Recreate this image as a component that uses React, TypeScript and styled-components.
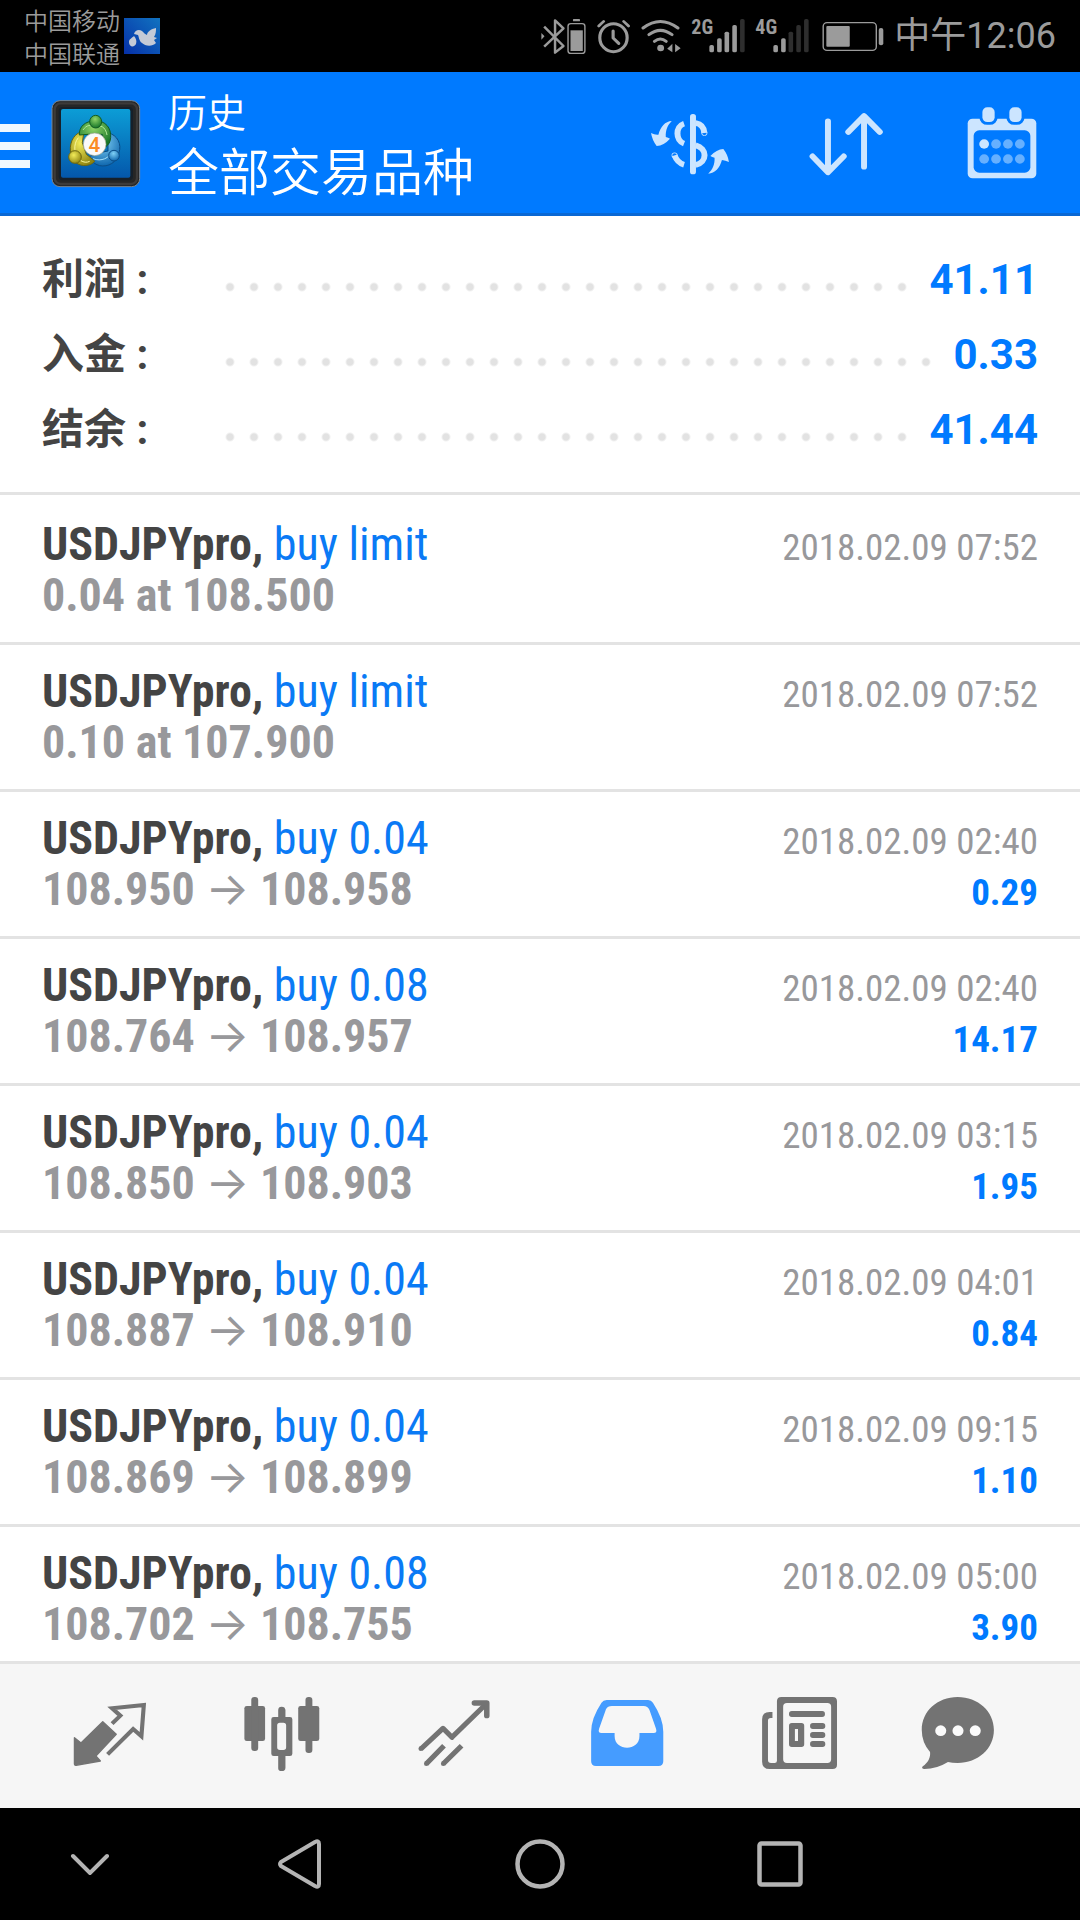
import React from "react";
import styled, { createGlobalStyle } from "styled-components";

const sans = `Roboto, "Noto Sans CJK SC", sans-serif`;
const condensed = `"Roboto Condensed", "Liberation Sans Narrow", Roboto, "Noto Sans CJK SC", sans-serif`;
const cjk = `"Noto Sans CJK SC", sans-serif`;

const color = {
  blue: "#007aff",
  blueDark: "#0a68d4",
  ice: "#cce5ff",
  link: "#0a7af5",
  ink: "#444444",
  muted: "#98989b",
  rule: "#e3e3e3",
  tab: "#737373",
  tabActive: "#459cff",
  status: "#9b9b9b",
};

const GlobalStyle = createGlobalStyle`
  *, *::before, *::after { box-sizing: border-box; }
  body { margin: 0; background: #fff; font-family: ${sans}; }
  h1, h2, p, dl, dt, dd, ul { margin: 0; padding: 0; font-weight: inherit; font-size: inherit; }
  ul { list-style: none; }
`;

const Screen = styled.div`
  display: flex;
  flex-direction: column;
  height: 100vh;
  background: #fff;
`;

/* Status bar */

const StatusBar = styled.div`
  display: flex;
  align-items: center;
  justify-content: space-between;
  height: 72px;
  flex: none;
  padding: 0 24px;
  background: #000;
  color: ${color.status};
`;

const StatusGroup = styled.div<{ $gap: number }>`
  display: flex;
  align-items: center;
  gap: ${(p) => p.$gap}px;
`;

const Carriers = styled.div`
  font: 350 24px/33px ${cjk};
`;

const Signal = styled.div`
  display: flex;
  align-items: flex-start;
`;

const Network = styled.span`
  width: 18px;
  font: 700 20px/22px ${condensed};
`;

const Clock = styled.time`
  font: 400 36px/40px Roboto, ${cjk};
`;

const Glyph = styled.svg`
  display: block;
  flex: none;
`;

/* App bar */

const AppBar = styled.header`
  display: flex;
  align-items: stretch;
  height: 144px;
  flex: none;
  background: ${color.blue};
  box-shadow: inset 0 -3px ${color.blueDark};
  color: #fff;
`;

const IconButton = styled.button`
  display: flex;
  align-items: center;
  justify-content: center;
  border: 0;
  padding: 0;
  background: none;
  color: inherit;
  cursor: pointer;
`;

const MenuButton = styled(IconButton)`
  gap: 21px;
`;

const Titles = styled.div`
  flex: 1;
  display: flex;
  flex-direction: column;
  justify-content: center;
  padding: 0 0 8px 27px;
  white-space: nowrap;
`;

const Section = styled.p`
  font: 350 39px/58px ${cjk};
`;

const Title = styled.h1`
  font: 350 51px/60px ${cjk};
`;

const Action = styled(IconButton)`
  width: 156px;
  color: ${color.ice};
`;

/* Content */

const Content = styled.main`
  flex: 1;
  min-height: 0;
  overflow-y: auto;
  scrollbar-width: none;
`;

const Summary = styled.dl`
  padding: 26px 42px 25px;
  border-bottom: 3px solid ${color.rule};
`;

const SummaryRow = styled.div`
  display: flex;
  height: 75px;
  font: 700 42px/75px ${sans};
`;

const SummaryLabel = styled.dt`
  width: 174px;
  color: ${color.ink};
`;

const Leader = styled.span`
  flex: 1;
  margin-right: 12px;
  background: radial-gradient(circle at 14px 45px, #e2e2e2 3px, transparent 5px) 0 0 / 24px 75px;
`;

const SummaryValue = styled.dd`
  color: ${color.blue};
`;

const Deals = styled.ul`
  && {
    padding-top: 3px;
  }
`;

const Deal = styled.li`
  padding: 21px 42px;
  border-bottom: 3px solid ${color.rule};
  font: 700 46px/51px ${condensed};
`;

const DealLine = styled.div`
  display: flex;
  align-items: baseline;
  justify-content: space-between;
  height: 51px;
  color: ${color.muted};
`;

const Symbol = styled.h2`
  color: ${color.ink};
`;

const Side = styled.span`
  font-weight: 400;
  color: ${color.link};
`;

const Arrow = styled.span`
  font-family: Inter, ${cjk};
  font-weight: 400;
  line-height: 0;
`;

const DealTime = styled.time`
  font-size: 37px;
  font-weight: 400;
`;

const Profit = styled.span`
  font-size: 37px;
  color: ${color.blue};
`;

/* Bottom bars */

const TabBar = styled.nav`
  display: grid;
  grid-template-columns: repeat(5, 172fr) 148fr;
  height: 147px;
  flex: none;
  padding: 0 48px 0 24px;
  border-top: 3px solid ${color.rule};
  background: #f6f6f6;
`;

const Tab = styled(IconButton)<{ $active?: boolean }>`
  color: ${(p) => (p.$active ? color.tabActive : color.tab)};
`;

const SystemBar = styled.div`
  display: grid;
  grid-template-columns: 180fr 240fr 240fr 240fr 180fr;
  height: 112px;
  flex: none;
  background: #000;
  color: #b4b4b4;
`;

/* Drawings */

type DrawingProps = { w: number; h: number; box: string; children: React.ReactNode };

const Drawing = ({ w, h, box, children }: DrawingProps) => (
  <Glyph width={w} height={h} viewBox={box} preserveAspectRatio="none" fill="currentColor" aria-hidden="true">
    {children}
  </Glyph>
);

const BirdBadge = () => (
  <Drawing w={36} h={36} box="0 0 36 36">
    <defs>
      <linearGradient id="sky" x1="0" y1="1" x2="1" y2="0">
        <stop offset="0" stopColor="#0630a8" />
        <stop offset="1" stopColor="#1173c0" />
      </linearGradient>
    </defs>
    <rect width="36" height="36" fill="url(#sky)" />
    <path
      fill="#c4cad6"
      d="M10 16C11 12 15 11 18 13C20 15 21 16 23 17C23 14 27 11 32 10C32 13 32 16 30 19L33 20L30 22L32 25C28 29 21 28 18 25C15 23 15 19 14 17Z"
    />
    <path fill="#c4cad6" d="M10 18C12 20 13 23 12 26C10 30 5 29 5 24C5 21 8 20 10 18Z" />
  </Drawing>
);

const BluetoothIcon = () => (
  <Drawing w={46} h={40} box="33 48 131 120">
    <path d="M34 99L43 109L34 119Z" />
    <path d="M42 80L97 138L73 158V61L97 85L42 140" fill="none" stroke="currentColor" strokeWidth="7" strokeLinejoin="round" />
    <rect x="110" y="71" width="48" height="89" rx="8" fill="none" stroke="currentColor" strokeWidth="4" />
    <rect x="117" y="91" width="35" height="62" />
    <rect x="124" y="57" width="20" height="7" rx="2" />
  </Drawing>
);

const AlarmIcon = () => (
  <Drawing w={34} h={40} box="194 48 97 120">
    <g fill="none" stroke="currentColor" strokeLinecap="round" strokeLinejoin="round">
      <ellipse cx="241" cy="113" rx="39" ry="42" strokeWidth="9" />
      <path d="M240 93V114L256 130" strokeWidth="9" />
      <path d="M199 78L213 64M284 78L270 64" strokeWidth="8" />
    </g>
  </Drawing>
);

const WifiIcon = () => (
  <Drawing w={40} h={40} box="314 48 116 120">
    <g fill="none" stroke="currentColor" strokeWidth="9" strokeLinecap="round">
      <path d="M320 84Q370 45 421 84" />
      <path d="M337 104Q370 78 404 104" />
      <path d="M353 124Q370 110 387 124" />
    </g>
    <ellipse cx="371" cy="144" rx="10" ry="10" />
    <path d="M405 131V157L390 146ZM413 132L429 145L413 157Z" />
  </Drawing>
);

const SignalBars = ({ level }: { level: number }) => (
  <Drawing w={36} h={40} box="507 48 102 120">
    {[
      [508, 135],
      [530, 115],
      [551, 95],
      [573, 75],
      [595, 57],
    ].map(([x, y], i) => (
      <rect key={x} x={x} y={y} width="13" height={157 - y} rx="5" fill={i < level ? "currentColor" : "#2e2e2e"} />
    ))}
  </Drawing>
);

const BatteryIcon = () => (
  <Drawing w={65} h={40} box="827 48 186 120">
    <rect x="839" y="68" width="152" height="83" rx="11" fill="none" stroke="currentColor" strokeWidth="4" />
    <rect x="848" y="78" width="67" height="62" rx="3" />
    <rect x="998" y="84" width="13" height="52" rx="6" />
  </Drawing>
);

const MenuIcon = () => (
  <Drawing w={30} h={48} box="0 0 30 48">
    <path fill="#f0f8ff" d="M0 4H30V12H0ZM0 22H30V30H0ZM0 40H30V48H0Z" />
  </Drawing>
);

const AppLogo = () => (
  <Drawing w={90} h={88} box="34 32 270 264">
    <defs>
      <linearGradient id="panel" x1="0" y1="0" x2="0" y2="1">
        <stop offset="0" stopColor="#0c9dd6" />
        <stop offset="1" stopColor="#0457ab" />
      </linearGradient>
      <radialGradient id="green" cx="0.45" cy="0.3" r="0.7">
        <stop offset="0" stopColor="#8fd468" />
        <stop offset="1" stopColor="#167528" />
      </radialGradient>
      <radialGradient id="gold" cx="0.4" cy="0.35" r="0.7">
        <stop offset="0" stopColor="#f2ec5a" />
        <stop offset="1" stopColor="#8e8410" />
      </radialGradient>
      <radialGradient id="azure" cx="0.45" cy="0.3" r="0.7">
        <stop offset="0" stopColor="#7fd0f5" />
        <stop offset="1" stopColor="#0f67ae" />
      </radialGradient>
    </defs>
    <rect x="37" y="34" width="263" height="258" rx="24" fill="#262626" stroke="#7c8790" strokeWidth="3" />
    <rect x="45" y="42" width="247" height="242" rx="18" fill="none" stroke="#3d3b3a" strokeWidth="7" />
    <rect x="57" y="53" width="223" height="220" rx="12" fill="#16202a" />
    <rect x="64" y="59" width="208" height="206" rx="6" fill="url(#panel)" />
    <g strokeWidth="3">
      <path fill="url(#azure)" stroke="#0b4d86" d="M205 130C235 138 246 165 238 190C232 220 205 234 180 229C164 225 154 214 147 203L170 192L205 185Z" />
      <path fill="none" stroke="#a5e0fa" d="M160 208C185 218 210 206 216 186" />
      <path fill="url(#gold)" stroke="#6d6710" d="M133 125C105 130 90 155 92 185C95 215 115 232 142 228C153 226 161 222 165 215L140 195L128 160Z" />
      <path fill="none" stroke="#faf79a" d="M116 145C100 165 102 195 122 213C132 220 142 220 150 216" />
      <path fill="url(#green)" stroke="#125c22" d="M119 137C118 112 135 96 166 94C198 94 215 116 213 145C212 158 207 166 198 172L188 135H145Z" />
      <path fill="none" stroke="#b3e89a" d="M130 122C140 107 155 103 166 116C180 103 198 112 202 137" />
      <ellipse cx="168" cy="97" rx="18" ry="19" fill="url(#green)" stroke="#125c22" />
      <circle cx="106" cy="203" r="19" fill="url(#gold)" stroke="#6d6710" />
      <circle cx="223" cy="199" r="16" fill="url(#azure)" stroke="#0b4d86" />
      <circle cx="165" cy="165" r="34" fill="#fafafa" stroke="#9aa38e" strokeWidth="2" />
    </g>
    <text x="164" y="187" textAnchor="middle" fontFamily="Roboto, sans-serif" fontWeight="500" fontSize="62" fill="#fb8b24">
      4
    </text>
  </Drawing>
);

const CurrencyIcon = () => (
  <Drawing w={80} h={64} box="342 330 228 192">
    <path d="M404 357C385 358 372 374 366 398Q355 399 345 393Q348 414 361 432Q381 431 399 410Q394 407 387 405C386 384 392 370 404 357Z" />
    <path d="M508 515C527 514 541 498 547 474Q557 475 567 480Q564 458 551 441Q532 442 514 462Q519 465 526 467C527 488 520 502 508 515Z" />
    <rect x="456" y="336" width="17" height="181" rx="8" />
    <g fill="none" stroke="currentColor" strokeWidth="17">
      <path d="M439 365C414 373 414 416 439 425" />
      <path d="M472 363C488 366 496 376 497 393" />
      <circle cx="497" cy="393" r="1" strokeWidth="15" />
      <path d="M472 430C506 440 506 480 472 489" />
      <path d="M412 460C417 474 425 484 439 488" />
      <circle cx="412" cy="460" r="1" strokeWidth="15" />
    </g>
  </Drawing>
);

const SortIcon = () => (
  <Drawing w={76} h={66} box="792 331 217 198">
    <g fill="none" stroke="currentColor" strokeWidth="17" strokeLinecap="round" strokeLinejoin="round">
      <path d="M849 362V515M805 467L849 515L894 467" />
      <path d="M952 498V346M907 394L952 346L997 394" />
    </g>
  </Drawing>
);

const CalendarIcon = () => (
  <Drawing w={70} h={74} box="1247 319 200 222">
    <rect x="1249" y="354" width="196" height="179" rx="14" />
    <rect x="1266" y="389" width="162" height="127" rx="16" fill={color.blue} />
    <rect x="1291" y="320" width="35" height="44" rx="14" stroke={color.blue} strokeWidth="17" paintOrder="stroke" />
    <rect x="1368" y="320" width="35" height="44" rx="14" stroke={color.blue} strokeWidth="17" paintOrder="stroke" />
    {[430, 475].map((y) =>
      [1296, 1330, 1364, 1398].map((x) => (
        <circle key={`${x}-${y}`} cx={x} cy={y} r="14" fill={x === 1296 && y === 430 ? color.ice : "#66b0ff"} />
      )),
    )}
  </Drawing>
);

const TabDrawing = ({ x, children }: { x: number; children: React.ReactNode }) => (
  <Drawing w={78} h={78} box={`${x} 141 226 234`}>
    {children}
  </Drawing>
);

const QuotesIcon = () => (
  <TabDrawing x={207}>
    <path
      strokeWidth="4"
      stroke="currentColor"
      strokeLinejoin="round"
      d="M299 215L338 253L279 318L292 333L222 346Q217 347 217 341V263L236 279Z"
    />
    <path
      fill="none"
      stroke="currentColor"
      strokeWidth="12"
      d="M326 221L350 197L326 175L418 165L411 259L387 237L313 313"
    />
  </TabDrawing>
);

const ChartIcon = () => (
  <TabDrawing x={705}>
    <rect x="709" y="168" width="60" height="105" rx="7" />
    <rect x="729" y="141" width="20" height="162" rx="9" />
    <rect x="865" y="168" width="61" height="105" rx="7" />
    <rect x="886" y="141" width="20" height="168" rx="9" />
    <path
      fillRule="evenodd"
      d="M807 201V180Q807 170 817 170T828 180V201H841Q848 201 848 208V311Q848 318 841 318H828V353Q828 363 817 363T807 353V318H794Q787 318 787 311V208Q787 201 794 201ZM812 218Q804 218 804 226V292Q804 300 812 300H822Q830 300 830 292V226Q830 218 822 218Z"
    />
  </TabDrawing>
);

const TradeIcon = () => (
  <TabDrawing x={1204}>
    <g fill="none" stroke="currentColor" strokeWidth="15" strokeLinejoin="round">
      <path d="M1221 297L1285 235L1311 262L1410 162" />
      <path d="M1376 159H1412V197" strokeWidth="16" strokeLinecap="round" />
      <path d="M1237 341L1288 287M1286 341L1339 287" />
    </g>
    <circle cx="1221" cy="296" r="7" />
    <circle cx="1237" cy="341" r="7" />
    <circle cx="1286" cy="341" r="7" />
  </TabDrawing>
);

const HistoryIcon = () => (
  <TabDrawing x={136}>
    <path
      fillRule="evenodd"
      d="M193 150H313Q322 150 327 158Q357 205 357 245V334Q357 348 343 348H162Q148 348 148 334V245Q148 205 178 158Q183 150 193 150ZM208 168Q196 168 191 178L171 236Q167 249 178 249H216V258C216 305 288 305 288 258V249H329Q340 249 336 236L317 180Q312 168 300 168Z"
    />
  </TabDrawing>
);

const NewsIcon = () => (
  <TabDrawing x={639}>
    <path
      fillRule="evenodd"
      d="M704 141H852Q865 141 865 154V344Q865 357 852 357H670Q648 357 648 335V208Q648 186 670 186H678V204H673Q665 204 665 212V330Q665 339 674 339H684Q691 339 691 332V154Q691 141 704 141ZM720 159Q709 159 709 170V328Q709 339 720 339H837Q848 339 848 328V170Q848 159 837 159Z"
    />
    <rect x="726" y="183" width="104" height="18" rx="8" />
    <path fillRule="evenodd" d="M734 219H762Q770 219 770 227V283Q770 291 762 291H734Q726 291 726 283V227Q726 219 734 219ZM743 237V273H752V237Z" />
    <rect x="787" y="219" width="44" height="18" rx="8" />
    <rect x="787" y="246" width="44" height="18" rx="8" />
    <rect x="787" y="273" width="44" height="18" rx="8" />
  </TabDrawing>
);

const ChatIcon = () => (
  <TabDrawing x={1101}>
    <path d="M1213 141C1272 141 1318 184 1318 240C1318 296 1272 339 1213 339Q1197 339 1185 336Q1152 357 1117 357Q1106 356 1112 349C1127 338 1135 323 1133 306Q1109 278 1109 240C1109 184 1154 141 1213 141Z" />
    <circle cx="1164" cy="242" r="16" fill="#fafafa" />
    <circle cx="1214" cy="242" r="16" fill="#fafafa" />
    <circle cx="1264" cy="242" r="16" fill="#fafafa" />
  </TabDrawing>
);

const HideIcon = () => (
  <Drawing w={40} h={22} box="0 0 40 22">
    <path d="M3 3L20 20L37 3" fill="none" stroke="currentColor" strokeWidth="4" strokeLinecap="round" />
  </Drawing>
);

const BackIcon = () => (
  <Drawing w={44} h={50} box="0 0 44 50">
    <path
      d="M3 23L37 3Q41 1 41 5V45Q41 49 37 47L3 27Q1 25 3 23Z"
      fill="none"
      stroke="currentColor"
      strokeWidth="4"
      strokeLinejoin="round"
    />
  </Drawing>
);

const HomeIcon = () => (
  <Drawing w={50} h={50} box="0 0 50 50">
    <circle cx="25" cy="25" r="22.5" fill="none" stroke="currentColor" strokeWidth="4.5" />
  </Drawing>
);

const RecentIcon = () => (
  <Drawing w={46} h={46} box="0 0 46 46">
    <rect x="2.5" y="2.5" width="41" height="41" rx="2" fill="none" stroke="currentColor" strokeWidth="4.5" />
  </Drawing>
);

/* Data */

const totals = [
  { label: "利润 :", value: "41.11" },
  { label: "入金 :", value: "0.33" },
  { label: "结余 :", value: "41.44" },
];

type DealData = { side: string; time: string; order?: string; from?: string; to?: string; profit?: string };

const deals: DealData[] = [
  { side: "buy limit", time: "2018.02.09 07:52", order: "0.04 at 108.500" },
  { side: "buy limit", time: "2018.02.09 07:52", order: "0.10 at 107.900" },
  { side: "buy 0.04", time: "2018.02.09 02:40", from: "108.950", to: "108.958", profit: "0.29" },
  { side: "buy 0.08", time: "2018.02.09 02:40", from: "108.764", to: "108.957", profit: "14.17" },
  { side: "buy 0.04", time: "2018.02.09 03:15", from: "108.850", to: "108.903", profit: "1.95" },
  { side: "buy 0.04", time: "2018.02.09 04:01", from: "108.887", to: "108.910", profit: "0.84" },
  { side: "buy 0.04", time: "2018.02.09 09:15", from: "108.869", to: "108.899", profit: "1.10" },
  { side: "buy 0.08", time: "2018.02.09 05:00", from: "108.702", to: "108.755", profit: "3.90" },
];

const tabs = [
  { name: "行情", icon: <QuotesIcon /> },
  { name: "图表", icon: <ChartIcon /> },
  { name: "交易", icon: <TradeIcon /> },
  { name: "历史", icon: <HistoryIcon />, active: true },
  { name: "新闻", icon: <NewsIcon /> },
  { name: "消息", icon: <ChatIcon /> },
];

export default function App() {
  return (
    <Screen>
      <GlobalStyle />
      <StatusBar>
        <StatusGroup $gap={4}>
          <Carriers>
            <p>中国移动</p>
            <p>中国联通</p>
          </Carriers>
          <BirdBadge />
        </StatusGroup>
        <StatusGroup $gap={10}>
          <BluetoothIcon />
          <AlarmIcon />
          <WifiIcon />
          <Signal>
            <Network>2G</Network>
            <SignalBars level={4} />
          </Signal>
          <Signal>
            <Network>4G</Network>
            <SignalBars level={2} />
          </Signal>
          <BatteryIcon />
          <Clock>中午12:06</Clock>
        </StatusGroup>
      </StatusBar>

      <AppBar>
        <MenuButton aria-label="菜单">
          <MenuIcon />
          <AppLogo />
        </MenuButton>
        <Titles>
          <Section>历史</Section>
          <Title>全部交易品种</Title>
        </Titles>
        <Action aria-label="交易品种">
          <CurrencyIcon />
        </Action>
        <Action aria-label="排序">
          <SortIcon />
        </Action>
        <Action aria-label="日期">
          <CalendarIcon />
        </Action>
      </AppBar>

      <Content>
        <Summary>
          {totals.map((t) => (
            <SummaryRow key={t.label}>
              <SummaryLabel>{t.label}</SummaryLabel>
              <Leader />
              <SummaryValue>{t.value}</SummaryValue>
            </SummaryRow>
          ))}
        </Summary>
        <Deals>
          {deals.map((d, i) => (
            <Deal key={i}>
              <DealLine>
                <Symbol>
                  USDJPYpro, <Side>{d.side}</Side>
                </Symbol>
                <DealTime>{d.time}</DealTime>
              </DealLine>
              <DealLine>
                {d.order ? (
                  <p>{d.order}</p>
                ) : (
                  <p>
                    {d.from} <Arrow>→</Arrow> {d.to}
                  </p>
                )}
                {d.profit && <Profit>{d.profit}</Profit>}
              </DealLine>
            </Deal>
          ))}
        </Deals>
      </Content>

      <TabBar>
        {tabs.map((t) => (
          <Tab key={t.name} $active={t.active} aria-label={t.name}>
            {t.icon}
          </Tab>
        ))}
      </TabBar>

      <SystemBar>
        <IconButton aria-label="隐藏">
          <HideIcon />
        </IconButton>
        <IconButton aria-label="返回">
          <BackIcon />
        </IconButton>
        <IconButton aria-label="主页">
          <HomeIcon />
        </IconButton>
        <IconButton aria-label="最近">
          <RecentIcon />
        </IconButton>
      </SystemBar>
    </Screen>
  );
}
